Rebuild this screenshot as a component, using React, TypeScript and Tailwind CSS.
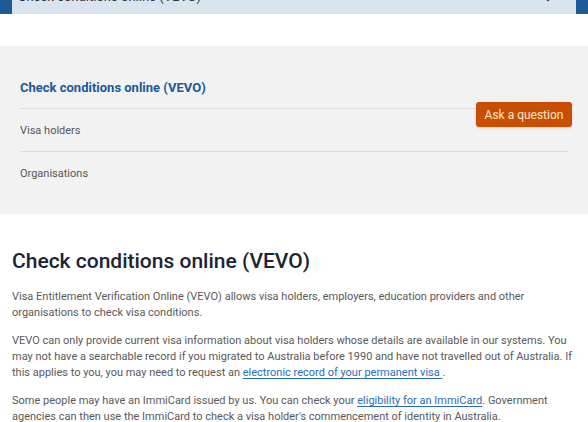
import React from 'react';
import { ChevronDown } from 'lucide-react';

const SIDE_LINKS = ['Visa holders', 'Organisations'];

export default function App() {
  return (
    <div className="w-[588px] h-[422px] overflow-hidden bg-white font-['Roboto',sans-serif]">
      {/* page-level nav select, scrolled mostly off the top */}
      <div className="h-[14px] bg-[#1c5b98] px-3">
        <div className="h-full bg-[#d9e4ef] overflow-hidden flex items-start justify-between pl-[6px] pr-[22px]">
          <span className="text-[13px] leading-[16px] -mt-[11px] text-[#2b3440]">Check conditions online (VEVO)</span>
          <ChevronDown size={12} strokeWidth={3} className="-mt-[7px] text-[#333]" />
        </div>
      </div>

      <div className="h-8" />

      <div className="relative bg-[#f2f2f2] px-5 pt-[21px] pb-[19px]">
        <div className="h-[42px] flex items-center border-b border-[#dcdcdc]">
          <span className="text-[13px] font-bold text-[#1b5a96]">Check conditions online (VEVO)</span>
        </div>
        {SIDE_LINKS.map((label, i) => (
          <div
            key={label}
            className={`h-[43px] flex items-center pt-[2px] ${i < SIDE_LINKS.length - 1 ? 'border-b border-[#dcdcdc]' : ''}`}
          >
            <span className="text-[11px] text-[#555]">{label}</span>
          </div>
        ))}

        <button className="absolute top-[56px] right-4 w-[96px] h-[25px] rounded-[3px] bg-[#c84f02] text-[#fbe6d0] text-[12px] shadow-sm">
          Ask a question
        </button>
      </div>

      <div className="px-3 pt-[33px]">
        <h1 className="text-[21px] leading-7 font-medium text-[#1a2433] mb-[14px]">Check conditions online (VEVO)</h1>
        <div className="text-[11px] leading-4 text-[#595959] flex flex-col gap-3">
          <p>
            Visa Entitlement Verification Online (VEVO) allows visa holders, employers, education providers and other organisations to check visa conditions.
          </p>
          <p>
            VEVO can only provide current visa information about visa holders whose details are available in our systems. You may not have a searchable record if you migrated to Australia before 1990 and have not travelled out of Australia. If this applies to you, you may need to request an{' '}
            <a href="#" className="text-[#2a6db5] underline underline-offset-2">electronic record of your permanent visa </a>.
          </p>
          <p>
            Some people may have an ImmiCard issued by us. You can check your{' '}
            <a href="#" className="text-[#2a6db5] underline underline-offset-2">eligibility for an ImmiCard</a>. Government agencies can then use the ImmiCard to check a visa holder's commencement of identity in Australia.
          </p>
        </div>
      </div>
    </div>
  );
}
